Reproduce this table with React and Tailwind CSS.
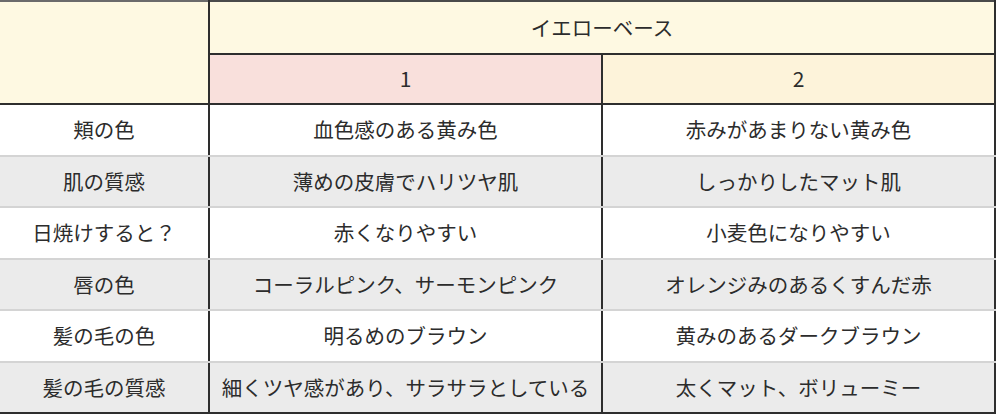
import React from 'react'

const rows = [
  ['頬の色', '血色感のある黄み色', '赤みがあまりない黄み色'],
  ['肌の質感', '薄めの皮膚でハリツヤ肌', 'しっかりしたマット肌'],
  ['日焼けすると？', '赤くなりやすい', '小麦色になりやすい'],
  ['唇の色', 'コーラルピンク、サーモンピンク', 'オレンジみのあるくすんだ赤'],
  ['髪の毛の色', '明るめのブラウン', '黄みのあるダークブラウン'],
  ['髪の毛の質感', '細くツヤ感があり、サラサラとしている', '太くマット、ボリューミー'],
]

export default function App() {
  return (
    <div className="w-[1000px] h-[419px] bg-white overflow-hidden font-['Noto_Sans_CJK_JP',sans-serif] text-[20.5px] text-[#2c2c2c]">
      <table className="table-fixed border-collapse w-[995px]">
        <colgroup>
          <col className="w-[209px]" />
          <col className="w-[393px]" />
          <col className="w-[393px]" />
        </colgroup>
        <thead>
          <tr className="h-[53px]">
            <th
              rowSpan={2}
              className="bg-[#fef9e2] border-t-2 border-t-[#6b6b6b] border-r-2 border-r-[#2e2e2e] border-b-2 border-b-[#2e2e2e] font-normal"
            />
            <th
              colSpan={2}
              className="bg-[#fef9e2] border-t-2 border-t-[#4a4a4a] border-r-2 border-r-[#2e2e2e] border-b-2 border-b-[#2e2e2e] font-normal text-center"
            >
              イエローベース
            </th>
          </tr>
          <tr className="h-[50px]">
            <th className="bg-[#f9e0dc] border-r-2 border-r-[#2e2e2e] border-b-2 border-b-[#2e2e2e] font-normal text-center text-[21px]">
              1
            </th>
            <th className="bg-[#fdf3da] border-r-2 border-r-[#2e2e2e] border-b-2 border-b-[#2e2e2e] font-normal text-center text-[21px]">
              2
            </th>
          </tr>
        </thead>
        <tbody>
          {rows.map((r, i) => {
            const last = i === rows.length - 1
            const bg = i % 2 === 0 ? 'bg-white' : 'bg-[#ebebeb]'
            const bottom = last ? 'border-b-2 border-b-[#2e2e2e]' : 'border-b-2 border-b-[#d4d4d4]'
            return (
              <tr key={i} className={`h-[51.5px] ${bg}`}>
                <td className={`text-center whitespace-nowrap border-r-2 border-r-[#2e2e2e] ${bottom}`}>{r[0]}</td>
                <td className={`text-center whitespace-nowrap border-r-2 border-r-[#2e2e2e] ${bottom}`}>{r[1]}</td>
                <td className={`text-center whitespace-nowrap border-r-2 border-r-[#2e2e2e] ${bottom}`}>{r[2]}</td>
              </tr>
            )
          })}
        </tbody>
      </table>
    </div>
  )
}
